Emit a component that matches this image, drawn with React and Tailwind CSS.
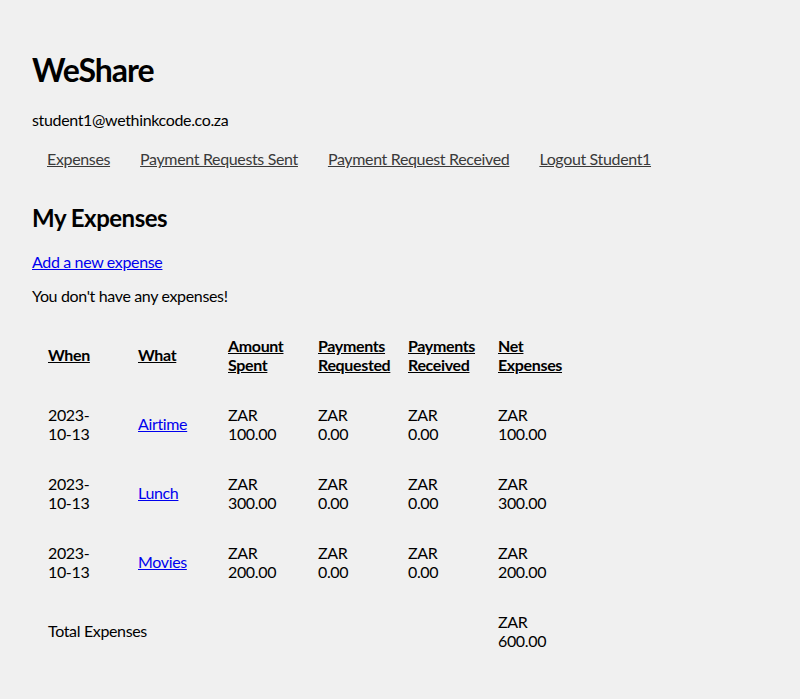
const rows = [
  { when: '2023-10-13', what: 'Airtime', spent: '100.00', req: '0.00', rec: '0.00', net: '100.00' },
  { when: '2023-10-13', what: 'Lunch', spent: '300.00', req: '0.00', rec: '0.00', net: '300.00' },
  { when: '2023-10-13', what: 'Movies', spent: '200.00', req: '0.00', rec: '0.00', net: '200.00' },
]

const NAV = ['Expenses', 'Payment Requests Sent', 'Payment Request Received', 'Logout Student1']

function Cell({ children, className = '' }) {
  return <td className={`w-[90px] pl-4 py-4 align-middle ${className}`}>{children}</td>
}

export default function App() {
  return (
    <div className="min-h-screen bg-[#f0f0f0] px-8 pt-[46px] text-[16px] leading-[18.5px] tracking-[-0.35px] text-black font-['Lato',sans-serif]">
      <h1 className="text-[32px] leading-[48px] font-bold tracking-[-1px]">WeShare</h1>
      <p className="mt-[17px]">student1@wethinkcode.co.za</p>

      <ul className="mt-[20px] flex">
        {NAV.map((n) => (
          <li key={n} className="px-[15px]">
            <a href="#" className="text-[#3a3a3a] underline">{n}</a>
          </li>
        ))}
      </ul>

      <h2 className="mt-[35px] text-[24px] leading-[30px] font-bold tracking-[-0.5px]">My Expenses</h2>
      <a href="#" className="mt-[20px] block w-fit text-[#0000ee] underline">Add a new expense</a>
      <p className="mt-[15px]">You don't have any expenses!</p>

      <table className="mt-[16px] border-collapse text-left">
        <thead>
          <tr className="font-bold">
            {['When', 'What', 'Amount Spent', 'Payments Requested', 'Payments Received', 'Net Expenses'].map((h) => (
              <th key={h} className="w-[90px] pl-4 py-4 align-middle font-bold">
                <span className="underline">{h}</span>
              </th>
            ))}
          </tr>
        </thead>
        <tbody>
          {rows.map((r) => (
            <tr key={r.what}>
              <Cell>{r.when.slice(0, 5)}<br />{r.when.slice(5)}</Cell>
              <Cell><a href="#" className="text-[#0000ee] underline">{r.what}</a></Cell>
              <Cell>ZAR<br />{r.spent}</Cell>
              <Cell>ZAR<br />{r.req}</Cell>
              <Cell>ZAR<br />{r.rec}</Cell>
              <Cell>ZAR<br />{r.net}</Cell>
            </tr>
          ))}
          <tr>
            <td colSpan={5} className="pl-4 py-4 align-middle">Total Expenses</td>
            <Cell>ZAR<br />600.00</Cell>
          </tr>
        </tbody>
      </table>
    </div>
  )
}
